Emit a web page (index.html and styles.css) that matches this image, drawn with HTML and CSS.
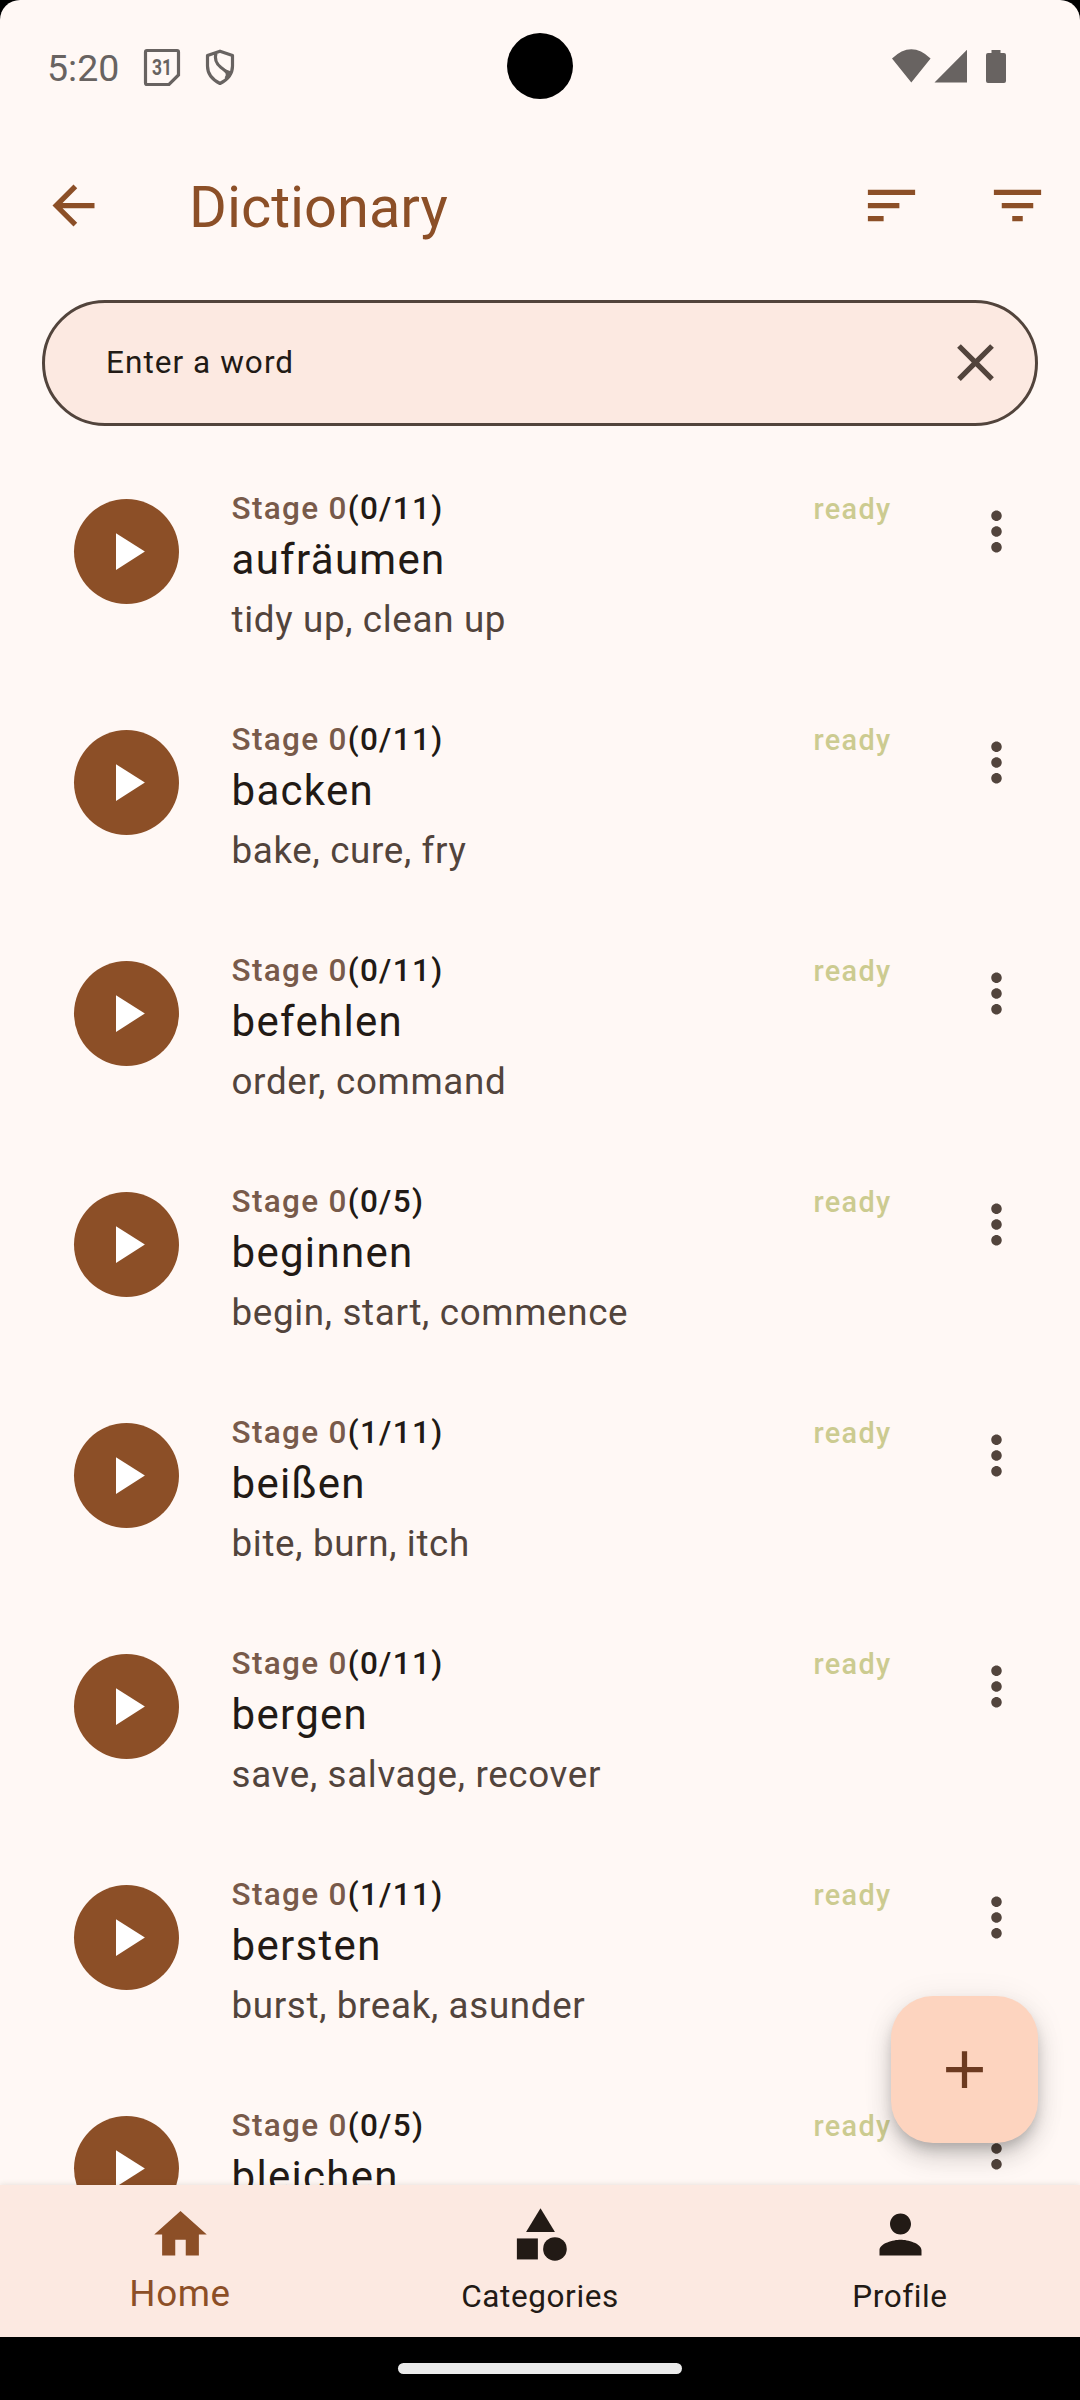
FILE: index.html
```
<!DOCTYPE html>
<html lang="en">
<head>
<meta charset="utf-8">
<title>Dictionary</title>
<link rel="stylesheet" href="styles.css">
</head>
<body>
<svg class="sprite" aria-hidden="true">
  <symbol id="play" viewBox="0 0 24 24"><path d="M8 5v14l11-7z"/></symbol>
  <symbol id="more" viewBox="0 0 24 24"><path d="M12 8c1.100 0 2-.9 2-2s-.9-2-2-2-2 .9-2 2 .9 2 2 2zm0 2c-1.100 0-2 .9-2 2s.9 2 2 2 2-.9 2-2-.9-2-2-2zm0 6c-1.100 0-2 .9-2 2s.9 2 2 2 2-.9 2-2-.9-2-2-2z"/></symbol>
</svg>
<div class="screen">
  <header class="status">
    <span class="clock">5:20</span>
    <svg class="calendar" viewBox="0 0 38 40"><path d="M4 2.500H34Q35.500 2.500 35.500 4V27L26 36.500H4Q2.500 36.500 2.500 35V4Q2.500 2.500 4 2.500Z" fill="none" stroke="currentColor" stroke-width="3.200"/><text x="9" y="26.500" textLength="20" lengthAdjust="spacingAndGlyphs">31</text></svg>
    <svg class="shield" viewBox="0 0 32 38"><path d="M16 2.200L28.500 6.500V17C28.500 25 23 31 16 34.500C9 31 3.500 25 3.500 17V6.500ZM12 4C10 11 12.500 15 17 18.500C22.500 22.500 25.500 24.500 22 29.500" fill="none" stroke="currentColor" stroke-width="3.200" stroke-linejoin="round"/><path d="M18 19Q25 24 23 29L27 24L26 22Z"/></svg>
    <svg class="signals" viewBox="0 0 116 36"><path d="M0 9.500Q19.300-9 38.600 9.500L19.300 33.500ZM42.500 33.500L75 .7V33.500ZM99.500 1h9v3h3.500q2 0 2 2v26q0 2-2 2H96q-2 0-2-2V6q0-2 2-2h3.500z"/></svg>
    <i class="camera"></i>
  </header>
  <div class="appbar">
    <svg class="icon back" viewBox="0 0 24 24"><path d="M20 11H7.830l5.590-5.590L12 4l-8 8 8 8 1.410-1.410L7.830 13H20v-2z"/></svg>
    <h1>Dictionary</h1>
    <svg class="icon" viewBox="0 0 24 24"><path d="M3 18h6v-2H3v2zM3 6v2h18V6H3zm0 7h12v-2H3v2z"/></svg>
    <svg class="icon" viewBox="0 0 24 24"><path d="M10 18h4v-2h-4v2zM3 6v2h18V6H3zm3 7h12v-2H6v2z"/></svg>
  </div>
  <div class="search">
    <span>Enter a word</span>
    <svg class="icon" viewBox="0 0 24 24"><path d="M19 6.410L17.590 5 12 10.590 6.410 5 5 6.410 10.590 12 5 17.590 6.410 19 12 13.410 17.590 19 19 17.590 13.410 12z"/></svg>
  </div>
  <main class="list">
    <article class="row"><div class="play"><svg class="icon"><use href="#play"/></svg></div><div class="entry"><div class="meta"><span><b>Stage 0</b>(0/11)</span><em>ready</em></div><h2>aufräumen</h2><p>tidy up, clean up</p></div><svg class="icon more"><use href="#more"/></svg></article>
    <article class="row"><div class="play"><svg class="icon"><use href="#play"/></svg></div><div class="entry"><div class="meta"><span><b>Stage 0</b>(0/11)</span><em>ready</em></div><h2>backen</h2><p>bake, cure, fry</p></div><svg class="icon more"><use href="#more"/></svg></article>
    <article class="row"><div class="play"><svg class="icon"><use href="#play"/></svg></div><div class="entry"><div class="meta"><span><b>Stage 0</b>(0/11)</span><em>ready</em></div><h2>befehlen</h2><p>order, command</p></div><svg class="icon more"><use href="#more"/></svg></article>
    <article class="row"><div class="play"><svg class="icon"><use href="#play"/></svg></div><div class="entry"><div class="meta"><span><b>Stage 0</b>(0/5)</span><em>ready</em></div><h2>beginnen</h2><p>begin, start, commence</p></div><svg class="icon more"><use href="#more"/></svg></article>
    <article class="row"><div class="play"><svg class="icon"><use href="#play"/></svg></div><div class="entry"><div class="meta"><span><b>Stage 0</b>(1/11)</span><em>ready</em></div><h2>beißen</h2><p>bite, burn, itch</p></div><svg class="icon more"><use href="#more"/></svg></article>
    <article class="row"><div class="play"><svg class="icon"><use href="#play"/></svg></div><div class="entry"><div class="meta"><span><b>Stage 0</b>(0/11)</span><em>ready</em></div><h2>bergen</h2><p>save, salvage, recover</p></div><svg class="icon more"><use href="#more"/></svg></article>
    <article class="row"><div class="play"><svg class="icon"><use href="#play"/></svg></div><div class="entry"><div class="meta"><span><b>Stage 0</b>(1/11)</span><em>ready</em></div><h2>bersten</h2><p>burst, break, asunder</p></div><svg class="icon more"><use href="#more"/></svg></article>
    <article class="row"><div class="play"><svg class="icon"><use href="#play"/></svg></div><div class="entry"><div class="meta"><span><b>Stage 0</b>(0/5)</span><em>ready</em></div><h2>bleichen</h2></div><svg class="icon more"><use href="#more"/></svg></article>
  </main>
  <div class="fab"><svg class="icon" viewBox="0 0 24 24"><path d="M19 13h-6v6h-2v-6H5v-2h6V5h2v6h6v2z"/></svg></div>
  <nav class="tabs">
    <a class="tab active"><svg class="icon" viewBox="0 0 24 24"><path d="M10 20v-6h4v6h5v-8h3L12 3 2 12h3v8z"/></svg><span>Home</span></a>
    <a class="tab"><svg class="icon" viewBox="0 0 24 24"><path d="M12 2l-5.500 9h11z"/><circle cx="17.500" cy="17.500" r="4.500"/><path d="M3 13.500h8v8H3z"/></svg><span>Categories</span></a>
    <a class="tab"><svg class="icon" viewBox="0 0 24 24"><path d="M12 12c2.210 0 4-1.790 4-4s-1.790-4-4-4-4 1.790-4 4 1.790 4 4 4zm0 2c-2.670 0-8 1.340-8 4v2h16v-2c0-2.660-5.330-4-8-4z"/></svg><span>Profile</span></a>
  </nav>
</div>
<footer class="gesture"><i></i></footer>
</body>
</html>
```
FILE: styles.css
```
* { box-sizing: border-box; }
body {
  margin: 0;
  width: 1080px;
  height: 2400px;
  overflow: hidden;
  background: #000;
  font-family: Roboto, sans-serif;
  color: #221a15;
}
h1, h2, p { margin: 0; font-weight: 400; }
svg { display: block; flex: none; fill: currentColor; }
.sprite { position: absolute; width: 0; height: 0; }
.icon { width: 63px; height: 63px; }

.screen {
  position: relative;
  display: flex;
  flex-direction: column;
  height: 2337px;
  background: #fff8f5;
  border-radius: 20px 20px 0 0;
  overflow: hidden;
}

.status {
  position: relative;
  display: flex;
  height: 142px;
  padding: 46px 72px 0 47px;
  color: #686361;
}
.clock { width: 96px; font-size: 37.500px; line-height: 44px; }
.calendar { width: 38px; height: 40px; margin-top: 2px; }
.calendar text { font-size: 21.500px; font-weight: 700; }
.shield { width: 32px; height: 38px; margin: 3px 0 0 23px; }
.signals { width: 116px; height: 36px; margin: 3px 0 0 auto; }
.camera {
  position: absolute;
  left: 507px;
  top: 33px;
  width: 66px;
  height: 66px;
  border-radius: 50%;
  background: #000;
}

.appbar {
  display: flex;
  align-items: center;
  gap: 63px;
  height: 127px;
  padding: 0 31.500px 0 42px;
  color: #8c4f27;
}
.appbar .back { margin-right: 21px; }
.appbar h1 { flex: 1; font-size: 57.750px; line-height: 74px; padding-top: 3px; }

.search {
  display: flex;
  align-items: center;
  justify-content: space-between;
  flex: none;
  height: 126px;
  margin: 31px 42px 0;
  padding: 0 28.500px 0 61px;
  border: 3px solid #52443c;
  border-radius: 63px;
  background: #fce9e1;
  font-size: 31.500px;
  letter-spacing: 1.050px;
}
.search span { padding-bottom: 1px; }
.search .icon { color: #52443c; margin-bottom: 1px; }

.list { flex: 1; min-height: 0; overflow: hidden; padding-top: 52px; }
.row { display: flex; height: 231px; padding: 0 52.500px 0 73.500px; }
.play {
  flex: none;
  width: 105px;
  height: 105px;
  margin: 21px 53px 0 0;
  padding: 21px;
  border-radius: 50%;
  background: #8c4f27;
  color: #fff;
}
.entry { width: 660px; padding-top: 10px; }
.meta {
  display: flex;
  align-items: baseline;
  justify-content: space-between;
  font-size: 31.500px;
  line-height: 42px;
  font-weight: 500;
  letter-spacing: 1.310px;
}
.meta b { font-weight: 500; color: #785a4a; }
.meta em { font-size: 28.875px; font-style: normal; color: #cccb90; }
.row h2 { font-size: 42px; line-height: 60px; letter-spacing: 1.310px; }
.row p { font-size: 36.750px; line-height: 59px; letter-spacing: .660px; color: #52443c; }
.more { margin: 22px 0 0 auto; color: #52443c; }

.fab {
  position: absolute;
  left: 891px;
  top: 1996px;
  width: 147px;
  height: 147px;
  padding: 42px;
  border-radius: 42px;
  background: #fdd4bf;
  color: #6c3a20;
  box-shadow: 0 8px 13px -3px rgba(0,0,0,.2), 0 16px 26px rgba(0,0,0,.13), 0 3px 32px rgba(0,0,0,.08);
}

.tabs {
  position: relative;
  flex: none;
  display: flex;
  height: 152px;
  background: #fce9e1;
  box-shadow: 0 -1px 5px rgba(60,50,30,.1);
}
.tab {
  flex: 1;
  display: flex;
  flex-direction: column;
  align-items: center;
  padding-top: 18px;
  font-size: 31.500px;
  letter-spacing: .600px;
}
.tab span { line-height: 48px; padding-top: 7px; }
.active { color: #8c4f27; font-size: 36.750px; }
.active span { padding-top: 4px; }

.gesture { height: 63px; padding-top: 26px; }
.gesture i {
  display: block;
  width: 284px;
  height: 11px;
  margin: 0 auto;
  border-radius: 5.500px;
  background: #ebebeb;
}
```
